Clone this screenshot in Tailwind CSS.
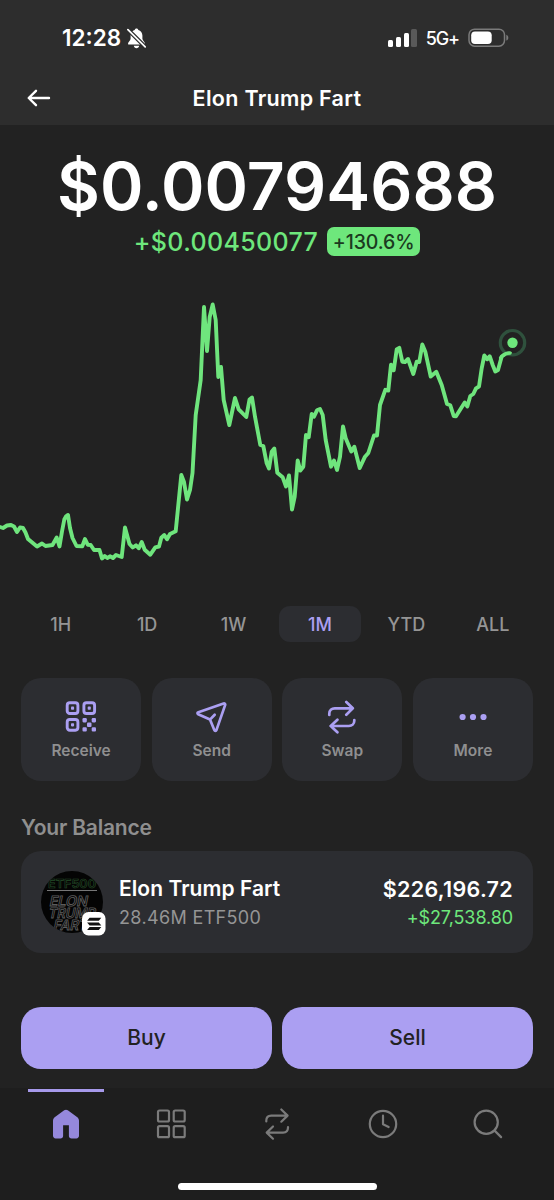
<!DOCTYPE html>
<html lang="en">
<head>
<meta charset="utf-8">
<meta name="viewport" content="width=device-width, initial-scale=1">
<title>Elon Trump Fart</title>
<script src="https://cdn.jsdelivr.net/npm/@tailwindcss/browser@4"></script>
</head>
<body class="bg-[#222222]">
<div class="w-[554px] h-[1200px] overflow-hidden flex flex-col bg-[#222222] text-white font-['Inter','Liberation_Sans',sans-serif]">

  <!-- Status bar and title -->
  <header class="h-[125px] shrink-0 bg-[#2d2d2d] flex flex-col">
    <div class="h-[75px] pl-[62px] pr-[45.5px] pt-px flex items-center justify-between">
      <div class="flex items-center gap-[6px]">
        <span class="text-[22.5px] leading-7 font-semibold">12:28</span>
        <svg class="w-[19px] h-[21px]" viewBox="0 0 19 21" fill="none">
          <path d="M9.5 .5c-.9 0-1.7.7-1.8 1.600C5.200 2.800 3.600 5 3.600 7.600v3.200c0 1.500-2.600 3.200-2.600 4.900 0 .6.4.9 1 .9h15c.6 0 1-.3 1-.9 0-1.700-2.600-3.400-2.600-4.900V7.600c0-2.600-1.600-4.800-4.100-5.500C11.200 1.200 10.400.5 9.500.5z" fill="#fff"/>
          <path d="M6.800 17.800h5.400c-.2 1.400-1.300 2.400-2.700 2.400s-2.500-1-2.700-2.400z" fill="#fff"/>
          <path d="M.8 1.500 18.300 19" stroke="#2d2d2d" stroke-width="4"/>
          <path d="M.9 1.600 18.200 18.900" stroke="#fff" stroke-width="1.700" stroke-linecap="round"/>
        </svg>
      </div>
      <div class="flex items-center">
        <div class="flex items-end gap-[2.500px] h-[18px]">
          <span class="w-[5.300px] h-[7px] rounded-[1.500px] bg-white"></span>
          <span class="w-[5.300px] h-[10px] rounded-[1.500px] bg-white"></span>
          <span class="w-[5.300px] h-[14px] rounded-[1.500px] bg-white"></span>
          <span class="w-[5.300px] h-[18px] rounded-[1.500px] bg-[#595959]"></span>
        </div>
        <span class="ml-[9px] pt-px text-[18px] leading-6 font-medium tracking-[-1.1px]">5G+</span>
        <svg class="ml-[8.500px] w-[41px] h-[20px]" viewBox="0 0 41 20" fill="none">
          <rect x="1" y="1.200" width="35.500" height="17" rx="5.600" stroke="#7b7b7b" stroke-width="1.500"/>
          <rect x="3.200" y="3.400" width="20.500" height="12.600" rx="3.800" fill="#fff"/>
          <path d="M38.300 6.800c1.300.5 2 1.600 2 2.900s-.7 2.400-2 2.900z" fill="#7b7b7b"/>
        </svg>
      </div>
    </div>
    <div class="h-[46px] grid grid-cols-[60px_1fr_60px] items-center">
      <svg class="ml-[27px] w-[24px] h-[18px]" viewBox="0 0 24 18" fill="none" stroke="#fff" stroke-width="2.400" stroke-linecap="round" stroke-linejoin="round"><path d="M22 9H2M9 1.800 1.700 9 9 16.200"/></svg>
      <h1 class="pb-px text-center text-[21.5px] leading-7 font-semibold tracking-[0.3px]">Elon Trump Fart</h1>
    </div>
  </header>

  <!-- Price -->
  <section class="h-[157px] shrink-0 pt-[26px] flex flex-col items-center">
    <div class="text-[66px] leading-[70px] font-semibold whitespace-nowrap">$0.00794688</div>
    <div class="mt-[6px] h-[29px] flex items-center gap-[9px]">
      <span class="text-[25px] leading-7 font-medium tracking-[0.350px] text-[#6ee77c]">+$0.00450077</span>
      <span class="h-[29px] w-[93px] flex items-center justify-center rounded-[7px] bg-[#6ee77c] text-[#1b3a20] text-[19.500px] leading-6 font-medium tracking-[-0.100px]">+130.6%</span>
    </div>
  </section>

  <!-- Price chart -->
  <svg class="w-[554px] h-[298px] shrink-0" viewBox="0 282 554 298" fill="none">
    <polyline stroke="#6fe57d" stroke-width="3.900" stroke-linejoin="round" stroke-linecap="round" points="-3,526 0,527 3,528 7,525.500 11,525 14,526.500 17,532 20,527.500 23,528 25.500,532.500 28,539 37,546.500 42,543.500 45.500,546 52.500,545 56.700,537.500 59.500,546.500 62,531.500 64.300,519.500 66,516.300 68,515 70,528 72.500,538 76.500,546 82.300,546.300 85,539 87.700,544.700 90.700,545 94,550 99.500,550 102,558.500 104.700,556 107.300,558 110.300,556.300 113,558 116,555 121.700,557 125,527.500 129.500,544 132.700,547.500 136,545.300 138.700,548.300 141.700,542 144.700,549.700 150.300,554.700 155.300,547.300 159,546.500 161.300,537.700 164.300,535 167,539.300 170,534 175.700,531.300 181.300,475 184,482 187,499.500 190,490 192.500,473 195.700,415 200.700,380 204,307 207,351 209.700,317 212.700,304.500 215.700,320 218.300,377 221,367 223.700,400 229.300,425 235,398 238.700,409.300 246.300,417 249.500,399.500 252,397.500 255,416.700 260.300,445 263.300,446 266.700,463.300 269,468.500 271.700,451.700 274.300,448.500 277.300,472.700 282.700,477.300 286,486.500 289,475.500 292,509.500 294.700,496.700 297.700,460.500 300.300,470.500 303.300,466.700 306,435 308.700,437.300 311.700,414 314,416.700 317,410.300 320,409 322.700,415 325.700,440 331,466.700 334,460.500 337,470 340,456.700 343,426.500 345.700,438.300 351.300,451.500 354.300,446.700 359.700,468 365,456.700 368.300,453 374,435.500 377,435.500 380,405 385.300,389.800 388.300,390.500 391,364.800 393.700,370.300 396.700,349.500 399.300,347.800 402.300,361.700 405,362 408,359 413.300,374 416.700,361.700 419.300,362 422.300,344.500 425.300,351.700 430.700,376.500 436.300,371.700 441.700,385 447,404 450.300,405.300 453.700,416 456,416.300 464.700,402.500 467.300,406.500 470.300,396 473.300,394 476,388.300 479,386.500 481.700,368.300 484.300,355.500 487.300,359.300 489.700,356.200 492.700,365 495.300,371.500 498,370 501.700,356.500 505.700,353.600 510,353.200"/>
    <circle cx="512.500" cy="342.700" r="9" fill="#222222"/>
    <circle cx="512.500" cy="342.700" r="12.200" stroke="#315640" stroke-opacity=".9" stroke-width="3.200"/>
    <path d="M500.500 358l1.200-1.500 4-2.900 4.300-.4" stroke="#6fe57d" stroke-width="3.200" stroke-linecap="round" stroke-linejoin="round"/>
    <circle cx="512.500" cy="342.700" r="5.200" fill="#6ee77c"/>
  </svg>

  <!-- Time ranges -->
  <nav class="mt-[26px] pl-[17.500px] pr-[18px] h-[36px] shrink-0 grid grid-cols-6 text-[18px] leading-6 font-medium text-[#959595]">
    <span class="pt-px flex items-center justify-center">1H</span>
    <span class="pt-px flex items-center justify-center">1D</span>
    <span class="pt-px flex items-center justify-center">1W</span>
    <span class="pt-px mx-[2px] flex items-center justify-center rounded-[11px] bg-[#2c2d31] text-[#ab9ff2]">1M</span>
    <span class="pt-px flex items-center justify-center">YTD</span>
    <span class="pt-px flex items-center justify-center">ALL</span>
  </nav>

  <!-- Actions -->
  <section class="mt-[36px] px-[21px] h-[103px] shrink-0 grid grid-cols-4 gap-[10.500px] text-[15.500px] leading-5 font-semibold text-[#8f8f90]">
    <button class="rounded-[20px] bg-[#2c2d31] flex flex-col items-center pt-[22px]">
      <svg class="w-[34px] h-[34px]" viewBox="0 0 34 34" fill="none">
        <g stroke="#ab9ff2" stroke-width="2.900"><rect x="3.200" y="2.800" width="10.700" height="10.700" rx="2.600"/><rect x="19.900" y="2.800" width="10.700" height="10.700" rx="2.600"/><rect x="3.200" y="19.500" width="10.700" height="10.700" rx="2.600"/></g>
        <g fill="#ab9ff2"><rect x="7" y="6.600" width="3.100" height="3.100" rx=".8"/><rect x="23.700" y="6.600" width="3.100" height="3.100" rx=".8"/><rect x="7" y="23.300" width="3.100" height="3.100" rx=".8"/>
        <rect x="18.500" y="18.100" width="4.300" height="4.300" rx="1.100"/><rect x="27.700" y="18.100" width="4.300" height="4.300" rx="1.100"/><rect x="23" y="22.600" width="4.500" height="4.500" rx="1.100"/><rect x="18.500" y="27.300" width="4.300" height="4.300" rx="1.100"/><rect x="27.700" y="27.300" width="4.300" height="4.300" rx="1.100"/></g>
      </svg>
      <span class="mt-[7px]">Receive</span>
    </button>
    <button class="rounded-[20px] bg-[#2c2d31] flex flex-col items-center pt-[22px]">
      <svg class="w-[34px] h-[34px]" viewBox="0 0 34 34" fill="none" stroke="#ab9ff2" stroke-width="2.700" stroke-linecap="round" stroke-linejoin="round"><path d="M28.600 3.500 3.400 12.200c-1.200.5-1.300 1.500-.2 2.100l11.800 5.300 4.300 10.400c.5 1.200 1.700 1.100 2.200-.1l8.700-25c.3-.9-.6-1.700-1.600-1.400zM15.200 19.400l4.500-4.700"/></svg>
      <span class="mt-[7px]">Send</span>
    </button>
    <button class="rounded-[20px] bg-[#2c2d31] flex flex-col items-center pt-[22px]">
      <svg class="w-[34px] h-[34px]" viewBox="0 0 34 34" fill="none" stroke="#ab9ff2" stroke-width="2.700" stroke-linecap="round" stroke-linejoin="round"><path d="M4.300 15v-1.500c0-3.200 2.400-5.200 5.400-5.200h18M21.300 2l6.500 6.300-6.500 6.400M29.300 20v.8c0 3.200-2.400 5.200-5.400 5.200H5.600M12.400 19.700 5.700 26l6.700 6.300"/></svg>
      <span class="mt-[7px]">Swap</span>
    </button>
    <button class="rounded-[20px] bg-[#2c2d31] flex flex-col items-center pt-[22px]">
      <svg class="w-[34px] h-[34px]" viewBox="0 0 34 34" fill="#ab9ff2"><circle cx="6.600" cy="17" r="3.100"/><circle cx="17" cy="17" r="3.100"/><circle cx="27.500" cy="17" r="3.100"/></svg>
      <span class="mt-[7px]">More</span>
    </button>
  </section>

  <!-- Balance -->
  <section class="mt-[33px] px-[21px] shrink-0">
    <h2 class="h-[28px] text-[21px] leading-7 font-semibold tracking-[-0.200px] text-[#8f8f8f]">Your Balance</h2>
    <div class="mt-[9px] h-[102px] rounded-[20px] bg-[#2c2d31] px-[20px] flex items-center">
      <svg class="w-[66px] h-[66px] mt-[2px] shrink-0" viewBox="0 0 66 66">
        <defs><clipPath id="coin"><circle cx="31" cy="32" r="31"/></clipPath></defs>
        <circle cx="31" cy="32" r="31" fill="#040404"/>
        <g clip-path="url(#coin)" font-family="Inter, Liberation Sans, sans-serif" font-weight="600" fill="none" stroke-width=".6">
          <text x="7" y="18.200" font-size="12" textLength="48" lengthAdjust="spacingAndGlyphs" stroke="#244d28">ETF500</text>
          <path d="M6 20.500h50" stroke="#777" stroke-width="1"/>
          <g stroke="#5c5c5c" font-size="10">
            <text transform="translate(8 35.500) scale(1 1.400) skewX(-16)" textLength="38" lengthAdjust="spacingAndGlyphs">ELON</text>
            <text transform="translate(7 47.500) scale(1 1.400) skewX(-16)" textLength="47" lengthAdjust="spacingAndGlyphs">TRUMP</text>
            <text transform="translate(12 59.500) scale(1 1.400) skewX(-16)" textLength="34" lengthAdjust="spacingAndGlyphs">FART</text>
          </g>
        </g>
        <rect x="41" y="42" width="23.500" height="23.500" rx="6.500" fill="#fff"/>
        <g fill="#111"><path d="M48.600 47.800h11.700l-2.500 3h-11.700z"/><path d="M46.100 52.400h11.700l2.500 3H48.600z"/><path d="M48.600 57h11.700l-2.500 3h-11.700z"/></g>
      </svg>
      <div class="ml-[12px] flex-1 pt-[2px]">
        <div class="text-[21px] leading-7 font-semibold tracking-[0.060px]">Elon Trump Fart</div>
        <div class="mt-px text-[18px] leading-7 tracking-[0.350px] text-[#959595]">28.46M ETF500</div>
      </div>
      <div class="text-right pt-[2px]">
        <div class="text-[21.5px] leading-7 font-semibold tracking-[0.300px]">$226,196.72</div>
        <div class="mt-px text-[18px] leading-7 tracking-[-0.100px] text-[#6ee77c]">+$27,538.80</div>
      </div>
    </div>
  </section>

  <!-- Trade -->
  <section class="mt-[54px] px-[21px] h-[62px] shrink-0 grid grid-cols-2 gap-[10px] text-[21px] leading-7 font-medium text-[#222222]">
    <button class="rounded-[20px] bg-[#ab9ff2]">Buy</button>
    <button class="rounded-[20px] bg-[#ab9ff2]">Sell</button>
  </section>

  <!-- Tab bar -->
  <footer class="mt-[19px] h-[112px] shrink-0 bg-[#1e1e1e] flex flex-col">
    <div class="ml-[28px] mt-px w-[76px] h-[3px] bg-[#a699ea]"></div>
    <div class="mt-[15px] h-[34px] px-[13px] grid grid-cols-5 justify-items-center">
      <svg class="w-[34px] h-[34px]" viewBox="0 0 34 34"><path d="M15.200 3.300c1.100-.8 2.500-.8 3.600 0l9.200 6.700c1.300 1 2 2.200 2 3.800v15c0 1.500-1.100 2.600-2.600 2.600h-4.900c-1.500 0-2.600-1-2.600-2.500V18.200h-5.800v10.700c0 1.500-1.100 2.500-2.600 2.500H6.600C5.100 31.400 4 30.300 4 28.800v-15c0-1.600.7-2.800 2-3.800z" fill="#9588dc"/></svg>
      <svg class="w-[34px] h-[34px]" viewBox="0 0 34 34" fill="none" stroke="#7b7b7b" stroke-width="2.200"><rect x="4" y="3.500" width="11" height="11" rx="1.500"/><rect x="19.700" y="3.500" width="11" height="11" rx="1.500"/><rect x="4" y="19.200" width="11" height="11" rx="1.500"/><rect x="19.700" y="19.200" width="11" height="11" rx="1.500"/></svg>
      <svg class="w-[34px] h-[34px]" viewBox="0 0 34 34" fill="none" stroke="#7b7b7b" stroke-width="2.200" stroke-linecap="round" stroke-linejoin="round"><path d="M6.300 14.500v-.9c0-3.200 2-5 4.900-5h16M21.300 2.500l6.300 6.100-6.300 6.100M28 20v.6c0 3.200-2 5-4.900 5H6.800M13 19.500l-6.300 6.100 6.300 6.100"/></svg>
      <svg class="w-[34px] h-[34px]" viewBox="0 0 34 34" fill="none" stroke="#7b7b7b" stroke-width="2.200" stroke-linecap="round" stroke-linejoin="round"><circle cx="17" cy="17" r="13.200"/><path d="M17 8.700v8.600l5.600 2.700"/></svg>
      <svg class="w-[34px] h-[34px]" viewBox="0 0 34 34" fill="none" stroke="#7b7b7b" stroke-width="2.200" stroke-linecap="round"><circle cx="15.200" cy="15.200" r="11.600"/><path d="m23.600 23.600 6.500 6.500"/></svg>
    </div>
    <div class="mx-auto mt-[42px] w-[199px] h-[7px] rounded-full bg-white"></div>
  </footer>
</div>
</body>
</html>
